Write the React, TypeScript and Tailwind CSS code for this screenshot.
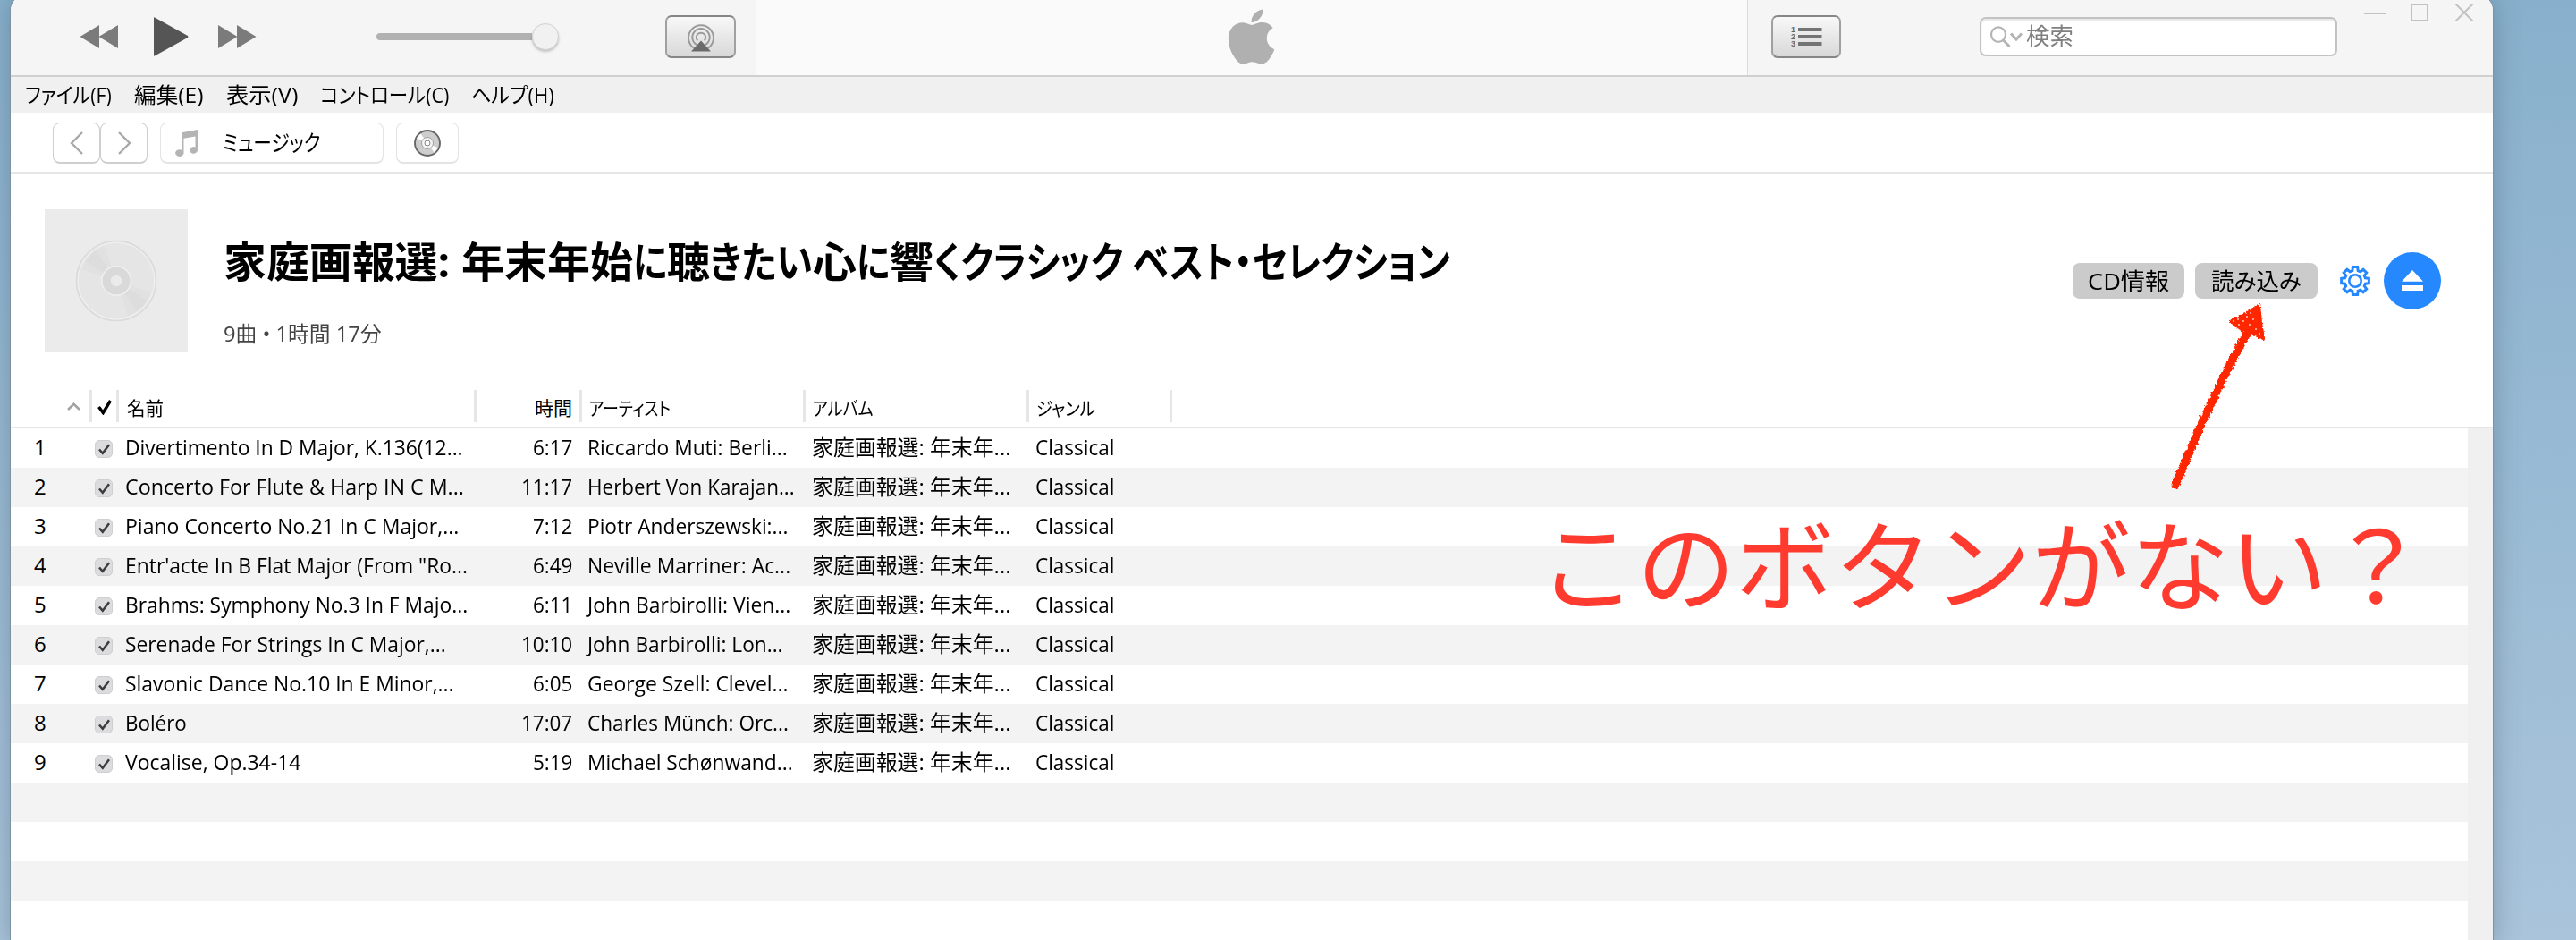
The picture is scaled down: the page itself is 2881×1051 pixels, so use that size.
import { useLayoutEffect, useRef, useState } from "react";
import type { ReactNode } from "react";
import { FaApple } from "react-icons/fa";

type FitProps = { w: number; className?: string; children: ReactNode };

/** One line of text, condensed or widened so that it takes exactly `w` pixels. */
function Fit({ w, className = "", children }: FitProps) {
  const ref = useRef<HTMLSpanElement>(null);
  const [scale, setScale] = useState(1);
  useLayoutEffect(() => {
    const measure = () => {
      if (ref.current && ref.current.offsetWidth > 0) setScale(w / ref.current.offsetWidth);
    };
    measure();
    document.fonts?.ready.then(measure);
  }, [w]);
  return (
    <span className={`block shrink-0 whitespace-nowrap ${className}`} style={{ width: w }}>
      <span ref={ref} className="inline-block origin-left whitespace-pre" style={{ transform: `scaleX(${scale})` }}>
        {children}
      </span>
    </span>
  );
}

const MENUS: [string, number][] = [
  ["ファイル(F)", 97],
  ["編集(E)", 78],
  ["表示(V)", 80],
  ["コントロール(C)", 144],
  ["ヘルプ(H)", 93],
];

type Track = { name: string; nw: number; time: string; tw: number; artist: string; aw: number };

const TRACKS: Track[] = [
  { name: "Divertimento In D Major, K.136(12...", nw: 378, time: "6:17", tw: 44, artist: "Riccardo Muti: Berli...", aw: 224 },
  { name: "Concerto For Flute & Harp IN C M...", nw: 379, time: "11:17", tw: 57, artist: "Herbert Von Karajan...", aw: 232 },
  { name: "Piano Concerto No.21 In C Major,...", nw: 373, time: "7:12", tw: 44, artist: "Piotr Anderszewski:...", aw: 224 },
  { name: "Entr'acte In B Flat Major (From \"Ro...", nw: 383, time: "6:49", tw: 44, artist: "Neville Marriner: Ac...", aw: 227 },
  { name: "Brahms: Symphony No.3 In F Majo...", nw: 383, time: "6:11", tw: 44, artist: "John Barbirolli: Vien...", aw: 227 },
  { name: "Serenade For Strings In C Major,...", nw: 359, time: "10:10", tw: 57, artist: "John Barbirolli: Lon...", aw: 219 },
  { name: "Slavonic Dance No.10 In E Minor,...", nw: 368, time: "6:05", tw: 44, artist: "George Szell: Clevel...", aw: 225 },
  { name: "Boléro", nw: 69, time: "17:07", tw: 57, artist: "Charles Münch: Orc...", aw: 225 },
  { name: "Vocalise, Op.34-14", nw: 196, time: "5:19", tw: 44, artist: "Michael Schønwand...", aw: 230 },
];

const ROWS = 13;

/** Title runs with their widths: kanji are set wide, kana narrow. */
const TITLE: [string, number][] = [
  ["家庭画報選: ", 266],
  ["年末年始", 192],
  ["に", 38],
  ["聴", 48],
  ["きたい", 115],
  ["心", 49],
  ["に", 37],
  ["響", 49],
  ["くクラシック ", 223],
  ["ベスト・セレクション", 355],
];

function Toolbar() {
  return (
    <div className="flex h-[92px] items-center border-b-2 border-[#d0d0d0] bg-[#f5f5f5] pt-[4px]">
      <div className="flex w-[833px] items-center">
        <svg className="ml-[77px] h-[26px] w-[43px]" viewBox="0 0 43 26" fill="#7b7b7b">
          <path d="M0.5 13 22 0v26zM21.5 13 43 0v26z" />
        </svg>
        <svg className="ml-[40px] h-[44px] w-[39px]" viewBox="0 0 39 44" fill="#555">
          <path d="M0 1q0-1 1-.6L38 21q1 1 0 2L1 43.6q-1 .4-1-.6z" />
        </svg>
        <svg className="ml-[33px] h-[26px] w-[43px]" viewBox="0 0 43 26" fill="#7b7b7b">
          <path d="M0 0 21.5 13 0 26zM21 0 42.5 13 21 26z" />
        </svg>
        <div className="ml-[134px] flex h-[32px] w-[204px] items-center">
          <div className="h-[8px] w-[174px] rounded-l-full bg-[#b1b1b1]" />
          <div className="size-[30px] shrink-0 rounded-full border border-[#d2d2d2] bg-[#f1f1f1] shadow-[0_2px_3px_rgba(0,0,0,0.22)]" />
        </div>
        <div className="ml-[119px] flex h-[48px] w-[79px] items-center justify-center rounded-[7px] border-2 border-[#868686] border-x-[#a0a0a0] bg-linear-to-b from-[#f8f8f8] to-[#d8d8d8]">
          <svg className="mt-[1px] h-[32px] w-[32px]" viewBox="0 0 32 32" fill="none" stroke="#9a9a9a" strokeWidth="2">
            <path d="M10.5 29A14 14 0 1 1 21.5 29" />
            <path d="M11.5 24.3A9.7 9.7 0 1 1 20.5 24.3" />
            <path d="M12.3 19.5A5.2 5.2 0 1 1 19.7 19.5" />
            <path d="M16 19.5 27 31.5H5z" fill="#6b6b6b" stroke="none" />
          </svg>
        </div>
      </div>
      <div className="-mt-[4px] flex h-[90px] w-[1110px] items-center justify-center border-x border-[#dcdcdc] bg-[#fafafa]">
        <FaApple className="mt-[4px] mr-[2px] h-[70px] w-[53px] text-[#b0b0b0]" />
      </div>
      <div className="flex flex-1 items-center">
        <div className="ml-[26px] flex h-[48px] w-[78px] items-center justify-center rounded-[7px] border-2 border-[#868686] border-x-[#a0a0a0] bg-linear-to-b from-[#f8f8f8] to-[#d8d8d8]">
          <svg className="h-[36px] w-[36px]" viewBox="0 0 36 36">
            <g fill="#747474">
              <rect x="9" y="8" width="26.5" height="4" />
              <rect x="9" y="16" width="26.5" height="4" />
              <rect x="9" y="24" width="26.5" height="4" />
            </g>
            <g fill="#666" className="font-['Liberation_Sans'] text-[9px] font-bold">
              <text x="1" y="13.2">1</text>
              <text x="1" y="21.2">2</text>
              <text x="1" y="29.2">3</text>
            </g>
          </svg>
        </div>
        <div className="ml-[155px] flex h-[44px] w-[400px] items-center rounded-[7px] border-2 border-[#c3c3c3] bg-white pl-[10px] text-[26px] text-[#808080] shadow-[inset_0_2px_2px_rgba(0,0,0,0.1)]">
          <svg className="h-[24px] w-[37px]" viewBox="0 0 37 24" fill="none" stroke="#b5b5b5" strokeWidth="2.2">
            <ellipse cx="9" cy="9.6" rx="8" ry="8.3" />
            <path d="M14.5 16 21.5 23" strokeWidth="3" />
            <path d="M23 8.5 29 15 35 8.5" strokeWidth="3" />
          </svg>
          <Fit w={53} className="-mt-[1px] ml-[3px]">検索</Fit>
        </div>
        <svg className="mb-[54px] ml-[30px] h-[20px] w-[124px]" viewBox="0 0 124 20" fill="none" stroke="#c2c2c2" strokeWidth="2">
          <path d="M0 11H24" />
          <path d="M53 1H71V19H53Z" />
          <path d="M102.500 .5 121.500 19.500M121.500 .5 102.500 19.500" />
        </svg>
      </div>
    </div>
  );
}

function MenuBar() {
  return (
    <div className="flex h-[40px] items-center gap-[25px] bg-[#f0f0f0] pl-[16px] text-[24px] leading-[40px]">
      {MENUS.map(([label, w]) => (
        <Fit key={label} w={w}>{label}</Fit>
      ))}
    </div>
  );
}

function NavBar() {
  return (
    <div className="flex h-[68px] items-center border-b-2 border-[#e6e6e6] pt-[2px] pl-[47px]">
      <div className="flex h-[46px] w-[53px] items-center justify-center rounded-[8px] border border-b-2 border-[#cfcfcf]">
        <svg className="h-[26px] w-[16px]" viewBox="0 0 16 26" fill="none" stroke="#a8a8a8" strokeWidth="2.4">
          <path d="M14 1 2 13 14 25" />
        </svg>
      </div>
      <div className="flex h-[46px] w-[53px] items-center justify-center rounded-[8px] border border-b-2 border-[#cfcfcf]">
        <svg className="h-[26px] w-[16px]" viewBox="0 0 16 26" fill="none" stroke="#a8a8a8" strokeWidth="2.4">
          <path d="M2 1 14 13 2 25" />
        </svg>
      </div>
      <div className="ml-[14px] flex h-[46px] w-[250px] items-center rounded-[8px] border border-b-2 border-[#e4e4e4] text-[25px]">
        <svg className="ml-[16px] h-[30px] w-[25px]" viewBox="0 0 25 30" fill="#b4b4b4">
          <path d="M7 3.200 25 0V23A4.500 3.800 0 1 1 22.500 19.500V7.500L9.500 9.800V26.500A4.700 3.800 0 1 1 7 22.700Z" />
        </svg>
        <Fit w={109} className="ml-[28px]">ミュージック</Fit>
      </div>
      <div className="ml-[14px] flex h-[46px] w-[70px] items-center justify-center rounded-[8px] border border-b-2 border-[#e4e4e4]">
        <svg className="h-[30px] w-[30px]" viewBox="0 0 30 30">
          <circle cx="15" cy="15" r="14" fill="#cdcdcd" stroke="#666" strokeWidth="1.900" />
          <path d="M15 15 2.800 9.500 7.500 4.500ZM15 15 27.200 20.500 22.500 25.500Z" fill="#fff" />
          <circle cx="15" cy="15" r="6.500" fill="#f4f4f4" stroke="#a0a0a0" />
          <circle cx="15" cy="15" r="3" fill="#fff" stroke="#858585" />
        </svg>
      </div>
    </div>
  );
}

const GEAR = Array.from({ length: 8 }, (_, i) => {
  const base = (i * Math.PI) / 4;
  return [
    [11.8, -0.27],
    [15.6, -0.17],
    [15.6, 0.17],
    [11.8, 0.27],
  ]
    .map(([r, a]) => `${(17 + r * Math.sin(base + a)).toFixed(2)},${(17 - r * Math.cos(base + a)).toFixed(2)}`)
    .join(" ");
}).join(" ");

function AlbumHeader() {
  return (
    <div className="flex h-[240px] pl-[38px] pt-[40px]">
      <svg className="size-[160px] bg-[#ebebeb]" viewBox="0 0 160 160">
        <circle cx="80" cy="80" r="44.500" fill="#e5e5e5" stroke="#dadada" strokeWidth="1.500" />
        <circle cx="80" cy="80" r="42.800" fill="none" stroke="#efefef" strokeWidth="1.300" />
        <path d="M80 80 41.500 67.500A41 41 0 0 1 67 41Z M80 80 118.500 92.500A41 41 0 0 1 93 119Z" fill="#e1e1e1" />
        <path d="M80 80 45.500 58A41 41 0 0 1 57 46Z M80 80 114.500 102A41 41 0 0 1 103 114Z" fill="#dddddd" />
        <circle cx="80" cy="80" r="16.300" fill="#d9d9d9" stroke="#f0f0f0" strokeWidth="1.500" />
        <circle cx="80" cy="80" r="6.200" fill="#ebebeb" />
      </svg>
      <div className="ml-[40px] flex w-[1400px] flex-col">
        <h1 className="mt-[24px] flex text-[47px] leading-[68px] font-bold">
          {TITLE.map(([run, w], i) => (
            <Fit key={i} w={w}>{run}</Fit>
          ))}
        </h1>
        <div className="mt-[29px] text-[24px] leading-[36px] text-[#444]">
          <Fit w={177}>9曲 • 1時間 17分</Fit>
        </div>
      </div>
      <div className="mt-[48px] mr-[58px] ml-auto flex h-[64px] items-center text-[26px]">
        <button className="flex h-[40px] w-[125px] items-center justify-center rounded-[8px] bg-[#cbcbcb]">
          <Fit w={91} className="-ml-[3px]">CD情報</Fit>
        </button>
        <button className="ml-[12px] flex h-[40px] w-[137px] items-center justify-center rounded-[8px] bg-[#cbcbcb]">
          <Fit w={101}>読み込み</Fit>
        </button>
        <svg className="ml-[25px] size-[34px]" viewBox="0 0 34 34" fill="none" stroke="#2688ff" strokeWidth="3">
          <polygon points={GEAR} />
          <circle cx="17" cy="17" r="6.700" strokeWidth="2.600" />
        </svg>
        <div className="ml-[15px] flex size-[64px] items-center justify-center rounded-full bg-[#2688ff]">
          <svg className="h-[24px] w-[24px]" viewBox="0 0 24 24" fill="#fff">
            <path d="M12 0 24 12.700H0zM0 17H24V23H0z" />
          </svg>
        </div>
      </div>
    </div>
  );
}

function ColumnHeader() {
  return (
    <div className="flex h-[45px] items-start border-b-2 border-[#e6e6e6] pt-[2px] text-[21px] leading-[40px]">
      <div className="flex h-[36px] w-[91px] items-center justify-end border-r-[3px] border-[#e6e6e6] pr-[10px]">
        <svg className="h-[9px] w-[15px]" viewBox="0 0 15 9" fill="none" stroke="#a3a3a3" strokeWidth="2.600">
          <path d="M1 8 7.500 1.800 14 8" />
        </svg>
      </div>
      <div className="flex h-[36px] w-[30px] items-center justify-center border-r-[3px] border-[#e6e6e6]">
        <svg className="mt-[3px] h-[17px] w-[16px]" viewBox="0 0 16 17" fill="none" stroke="#000" strokeWidth="3.400">
          <path d="M1.500 8 6.300 14.500 14.500 1" />
        </svg>
      </div>
      <div className="flex h-[36px] w-[400px] border-r-[3px] border-[#e6e6e6] pl-[9px]">
        <Fit w={41}>名前</Fit>
      </div>
      <div className="flex h-[36px] w-[118px] justify-end border-r-[3px] border-[#e6e6e6] pr-[8px]">
        <Fit w={42}>時間</Fit>
      </div>
      <div className="flex h-[36px] w-[250px] border-r-[3px] border-[#e6e6e6] pl-[8px]">
        <Fit w={91}>アーティスト</Fit>
      </div>
      <div className="flex h-[36px] w-[250px] border-r-[3px] border-[#e6e6e6] pl-[8px]">
        <Fit w={68}>アルバム</Fit>
      </div>
      <div className="flex h-[36px] w-[160px] border-r-2 border-[#e6e6e6] pl-[8px]">
        <Fit w={66}>ジャンル</Fit>
      </div>
    </div>
  );
}

function TrackRow({ track, n }: { track?: Track; n: number }) {
  return (
    <div className="flex h-[44px] items-center text-[24px] leading-[42px] odd:bg-white even:bg-[#f3f3f3]">
      {track && (
        <>
          <div className="-mt-[2px] flex w-[94px] pl-[26px]">
            <Fit w={14}>{n}</Fit>
          </div>
          <div className="mt-[2px] flex size-[20px] items-center justify-center rounded-[5px] border border-[#cfcfd1] bg-[#dcdcde]">
            <svg className="size-[13px]" viewBox="0 0 13 13" fill="none" stroke="#3c3c3c" strokeWidth="2.500">
              <path d="M1 6.500 4.800 10.800 12 1.200" />
            </svg>
          </div>
          <div className="-mt-[2px] ml-[14px] w-[389px]">
            <Fit w={track.nw}>{track.name}</Fit>
          </div>
          <div className="-mt-[2px] flex w-[111px] justify-end">
            <Fit w={track.tw}>{track.time}</Fit>
          </div>
          <div className="-mt-[2px] ml-[17px] w-[251px]">
            <Fit w={track.aw}>{track.artist}</Fit>
          </div>
          <div className="-mt-[2px] w-[250px]">
            <Fit w={222}>家庭画報選: 年末年...</Fit>
          </div>
          <Fit w={88} className="-mt-[2px]">Classical</Fit>
        </>
      )}
    </div>
  );
}

const SPECKS = [
  [73, 24], [78, 22], [79, 28], [84, 24], [88, 19], [92, 15], [95, 22], [91, 28], [98, 33], [102, 38],
];

function Annotation() {
  return (
    <>
      <svg className="pointer-events-none absolute top-[335px] left-[2425px] h-[215px] w-[120px]" viewBox="0 0 120 215">
        <defs>
          <filter id="chalk" x="-10%" y="-10%" width="120%" height="120%">
            <feTurbulence type="fractalNoise" baseFrequency="0.35" numOctaves="2" seed="4" />
            <feDisplacementMap in="SourceGraphic" scale="5" xChannelSelector="R" yChannelSelector="G" />
          </filter>
        </defs>
        <g filter="url(#chalk)" stroke="#ff2600" strokeLinecap="round" strokeLinejoin="round">
          <path d="M8 207 38 137 66 78 90 34" fill="none" strokeWidth="9" />
          <path d="M101 7 86 17 70 24 82 33 93 37 106 43 103 25Z" fill="#ff2600" strokeWidth="4" />
        </g>
        <g fill="#fff" fillOpacity="0.75">
          {SPECKS.map(([x, y]) => (
            <circle key={`${x}-${y}`} cx={x} cy={y} r="1" />
          ))}
        </g>
      </svg>
      <div className="pointer-events-none absolute top-[562px] left-[1720px] font-['Noto_Sans_CJK_JP',sans-serif] text-[110px] leading-[130px] text-[#ff3b30] [font-feature-settings:normal]">
        <Fit w={994}>このボタンがない？</Fit>
      </div>
    </>
  );
}

export default function App() {
  return (
    <div className="relative h-[1051px] w-[2881px] overflow-hidden bg-linear-to-b from-[#88b0cc] to-[#a9c4db] font-['Open_Sans','Noto_Sans_CJK_JP',sans-serif] text-black [font-feature-settings:'palt']">
      <div className="-mt-[6px] ml-[12px] flex h-[1063px] w-[2776px] flex-col overflow-hidden rounded-t-[18px] bg-white shadow-[0_0_0_1px_#7d93a3,0_0_30px_rgba(60,80,100,0.4)]">
        <Toolbar />
        <MenuBar />
        <NavBar />
        <AlbumHeader />
        <ColumnHeader />
        <div className="flex">
          <div className="w-[2748px]">
            {Array.from({ length: ROWS }, (_, i) => (
              <TrackRow key={i} track={TRACKS[i]} n={i + 1} />
            ))}
          </div>
          <div className="flex-1 bg-[#f0f0f0]" />
        </div>
      </div>
      <Annotation />
    </div>
  );
}
